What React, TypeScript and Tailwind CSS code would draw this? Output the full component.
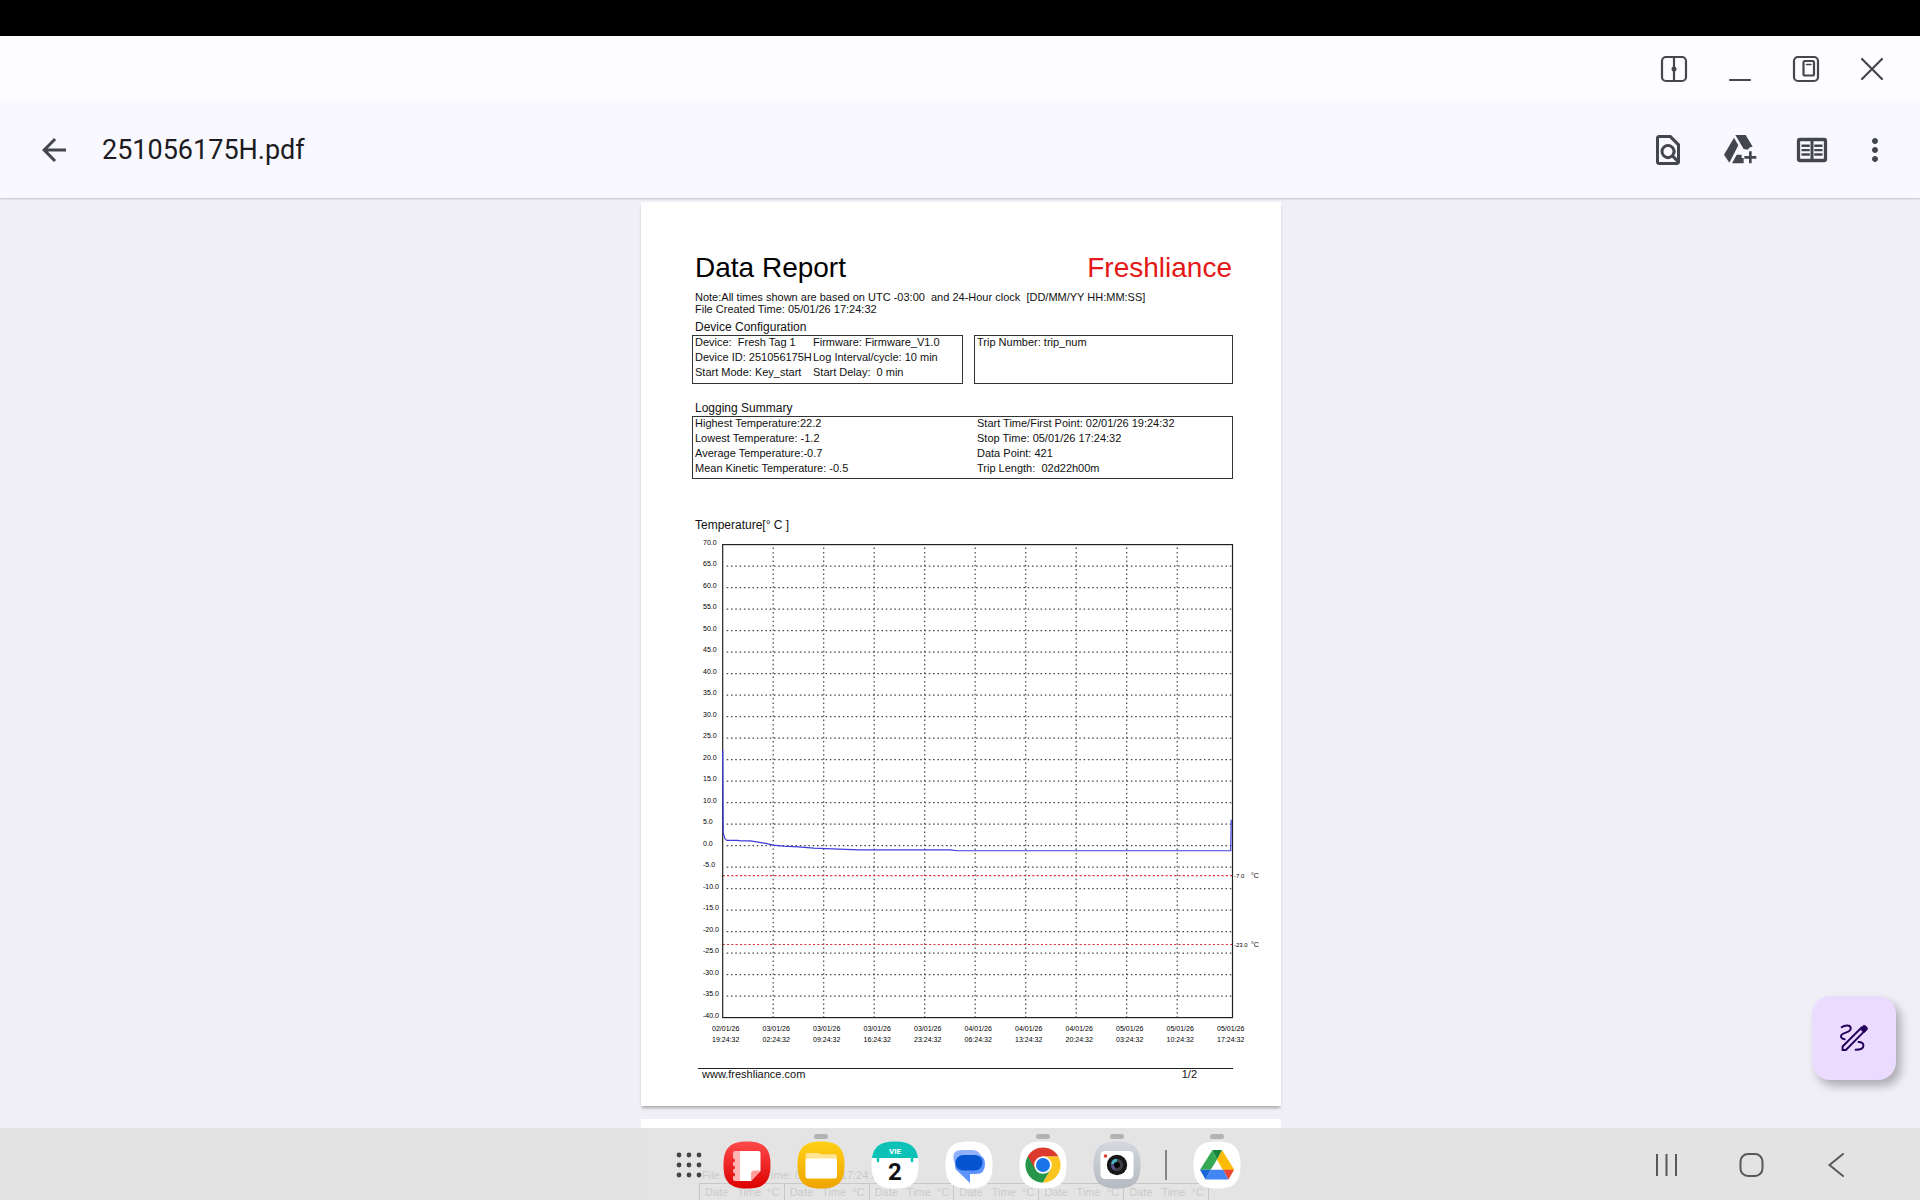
import type { ReactNode } from "react";
import { MdArrowBack, MdMoreVert, MdOutlineFindInPage } from "react-icons/md";

const SQUIRCLE = "M24 .5C41 .5 47.5 7 47.5 24S41 47.5 24 47.5.5 41 .5 24 7 .5 24 .5Z";

const windowButtons: { label: string; icon: ReactNode }[] = [
  {
    label: "Split screen",
    icon: (
      <>
        <rect x="4" y="4" width="24" height="24" rx="4" />
        <path d="M16 4v24" />
        <circle cx="16" cy="16" r="2.500" fill="currentColor" stroke="none" />
      </>
    ),
  },
  { label: "Minimise", icon: <path d="M6 27h20" /> },
  {
    label: "Pop-up view",
    icon: (
      <>
        <rect x="4" y="4" width="24" height="24" rx="4" />
        <rect x="13.500" y="8" width="10.500" height="14.500" rx="1.500" />
        <path d="M16.500 11.500h4.500" strokeWidth="1.500" />
      </>
    ),
  },
  { label: "Close", icon: <path d="M6 6l20 20M26 6l-20 20" /> },
];

function WindowBar() {
  return (
    <div className="flex h-[66px] shrink-0 items-center justify-end gap-[34px] bg-[#fdfdff] pr-8 text-[#47474b]">
      {windowButtons.map((b) => (
        <button key={b.label} aria-label={b.label} className="h-8 w-8">
          <svg
            viewBox="0 0 32 32"
            className="h-8 w-8"
            fill="none"
            stroke="currentColor"
            strokeWidth="2.200"
            strokeLinecap="round"
          >
            {b.icon}
          </svg>
        </button>
      ))}
    </div>
  );
}

function AddToDriveIcon() {
  return (
    <svg viewBox="21 6 108 108" className="h-9 w-9" fill="currentColor">
      <path d="M27 74 57 23l13 23-27 52Z" />
      <path d="M61 15h31l21 35q-10 0-15 9l-12-2Z" />
      <path d="M65 74h15v10h6v16H51Z" />
      <path d="M106 64v36M88 82h36" fill="none" stroke="currentColor" strokeWidth="8" />
    </svg>
  );
}

function ReaderIcon() {
  return (
    <svg viewBox="0 0 24 24" className="h-9 w-9" fill="none" stroke="currentColor" strokeWidth="1.600">
      <rect x="3" y="5" width="18" height="14" rx="1" strokeWidth="2.200" />
      <path d="M12 5v14" strokeWidth="2" />
      <path d="M5 9.200h5.500M5 12.100h5.500M5 15h5.500M13.500 9.200H19M13.500 12.100H19M13.500 15H19" />
    </svg>
  );
}

function AppBar() {
  return (
    <header className="relative z-10 flex h-24 shrink-0 items-center bg-[#f9f8ff] pr-[27px] pl-9 text-[#44464f] shadow-[0_1px_2px_rgba(0,0,0,0.2)]">
      <button aria-label="Back">
        <MdArrowBack className="h-9 w-9" />
      </button>
      <h1 className="ml-[30px] font-['Roboto',sans-serif] text-[27px] leading-8 text-[#1b1b21]">251056175H.pdf</h1>
      <div className="ml-auto flex items-center gap-9">
        <button aria-label="Find in file">
          <MdOutlineFindInPage className="h-9 w-9" />
        </button>
        <button aria-label="Add to Drive">
          <AddToDriveIcon />
        </button>
        <button aria-label="Reading mode">
          <ReaderIcon />
        </button>
      </div>
      <button aria-label="More options" className="ml-[27px]">
        <MdMoreVert className="h-9 w-9" />
      </button>
    </header>
  );
}

const timeLabels = [
  ["02/01/26", "19:24:32"],
  ["03/01/26", "02:24:32"],
  ["03/01/26", "09:24:32"],
  ["03/01/26", "16:24:32"],
  ["03/01/26", "23:24:32"],
  ["04/01/26", "06:24:32"],
  ["04/01/26", "13:24:32"],
  ["04/01/26", "20:24:32"],
  ["05/01/26", "03:24:32"],
  ["05/01/26", "10:24:32"],
  ["05/01/26", "17:24:32"],
];

// [time step, temperature]
const readings = [
  [0, 22.2],
  [0.01, 3],
  [0.04, 1.7],
  [0.08, 1.2],
  [0.3, 1.2],
  [0.35, 1.1],
  [0.55, 1.1],
  [0.7, 0.8],
  [0.85, 0.5],
  [1, 0.1],
  [1.2, -0.1],
  [1.5, -0.3],
  [1.8, -0.6],
  [2.3, -0.8],
  [2.7, -1],
  [4.5, -1],
  [4.65, -1.2],
  [10.06, -1.2],
  [10.07, 6],
];

const limits = [
  { value: -7, label: "-7.0" },
  { value: -23, label: "-23.0" },
];

const LEFT = 81.7;
const RIGHT = 591.5;
const TOP = 11.6;
const BOTTOM = 484.6;
const xOf = (step: number) => LEFT + step * 50.5;
const yOf = (temp: number) => TOP + (70 - temp) * 4.3;

function TemperatureChart() {
  const ticks = Array.from({ length: 23 }, (_, i) => 70 - i * 5);
  const points = readings.map(([s, t]) => `${xOf(s)},${yOf(t)}`).join(" ");

  return (
    <svg viewBox="0 0 640 520" className="block w-full font-['Liberation_Sans',Arial,sans-serif]" fill="#000">
      <g stroke="#444" strokeWidth="1.200" strokeDasharray="1.500 2.800">
        {ticks.slice(1, -1).map((t) => (
          <line key={t} x1={LEFT + 4} x2={RIGHT} y1={yOf(t)} y2={yOf(t)} />
        ))}
        {timeLabels.slice(1, -1).map((_, i) => (
          <line key={i} x1={xOf(i + 1)} x2={xOf(i + 1)} y1={TOP + 3} y2={BOTTOM} />
        ))}
      </g>
      {limits.map((l) => (
        <g key={l.label}>
          <line
            x1={LEFT}
            x2={RIGHT}
            y1={yOf(l.value)}
            y2={yOf(l.value)}
            stroke="#e03030"
            strokeWidth="1.200"
            strokeDasharray="2.100 2.200"
          />
          <text x="593" y={yOf(l.value) + 2} fontSize="6">
            {l.label}
          </text>
          <text x="610" y={yOf(l.value) + 2} fontSize="7">
            °C
          </text>
        </g>
      ))}
      <rect x={LEFT} y={TOP} width={RIGHT - LEFT} height={BOTTOM - TOP} fill="none" stroke="#222" strokeWidth="1.200" />
      <polyline points={points} fill="none" stroke="#3c3cdc" strokeWidth="1.200" />
      {ticks.map((t) => (
        <text key={t} x="62" y={yOf(t)} fontSize="7">
          {t.toFixed(1)}
        </text>
      ))}
      {timeLabels.map(([date, time], i) => (
        <g key={i} fontSize="7" textAnchor="middle">
          <text x={xOf(i) + 3} y="498">
            {date}
          </text>
          <text x={xOf(i) + 3} y="509">
            {time}
          </text>
        </g>
      ))}
    </svg>
  );
}

const deviceRows = [
  ["Device:  Fresh Tag 1", "Firmware: Firmware_V1.0"],
  ["Device ID: 251056175H", "Log Interval/cycle: 10 min"],
  ["Start Mode: Key_start", "Start Delay:  0 min"],
];

const summaryRows = [
  ["Highest Temperature:22.2", "Start Time/First Point: 02/01/26 19:24:32"],
  ["Lowest Temperature: -1.2", "Stop Time: 05/01/26 17:24:32"],
  ["Average Temperature:-0.7", "Data Point: 421"],
  ["Mean Kinetic Temperature: -0.5", "Trip Length:  02d22h00m"],
];

function ReportPage() {
  return (
    <article className="w-full max-w-[640px] bg-white pt-[50px] pb-[26px] font-['Liberation_Sans',Arial,sans-serif] text-[11px] leading-3 text-[#111] shadow-[0_3px_3px_-1px_rgba(0,0,0,0.3)]">
      <div className="pr-12 pl-[51px]">
        <div className="flex justify-between pr-px pl-[3px] text-[28px] leading-8">
          <h2 className="text-black">Data Report</h2>
          <span className="text-[#e51717]">Freshliance</span>
        </div>
        <div className="mt-[7px] pl-[3px] whitespace-pre">
          <p>Note:All times shown are based on UTC -03:00  and 24-Hour clock  [DD/MM/YY HH:MM:SS]</p>
          <p>File Created Time: 05/01/26 17:24:32</p>
        </div>

        <h3 className="mt-1 pl-[3px] text-xs leading-4">Device Configuration</h3>
        <div className="grid grid-cols-[271px_1fr] gap-[11px] leading-[15px] whitespace-pre">
          <div className="border border-[#333] pb-0.5 pl-0.5">
            {deviceRows.map(([a, b]) => (
              <div key={a} className="-mt-px mb-px grid grid-cols-[118px_1fr]">
                <span>{a}</span>
                <span>{b}</span>
              </div>
            ))}
          </div>
          <div className="border border-[#333] pl-0.5">
            <p className="-mt-px">Trip Number: trip_num</p>
          </div>
        </div>

        <h3 className="mt-4 pl-[3px] text-xs leading-4">Logging Summary</h3>
        <div className="border border-[#333] pb-px pl-0.5 leading-[15px] whitespace-pre">
          {summaryRows.map(([a, b]) => (
            <div key={a} className="-mt-px mb-px grid grid-cols-[282px_1fr]">
              <span>{a}</span>
              <span>{b}</span>
            </div>
          ))}
        </div>

        <h3 className="mt-[38px] pl-[3px] text-xs leading-4">Temperature[° C ]</h3>
      </div>
      <TemperatureChart />
      <footer className="mt-[15px] mr-12 ml-[57px] flex justify-between border-t border-[#222] pr-9 pl-1 leading-[11px]">
        <a href="#site">www.freshliance.com</a>
        <span>1/2</span>
      </footer>
    </article>
  );
}

function NextPage() {
  return (
    <article className="mt-[13px] w-full max-w-[640px] shrink-0 bg-white pt-[50px] pr-[72px] pb-20 pl-[58px] font-['Liberation_Sans',Arial,sans-serif] text-[11px] leading-3 text-black">
      <p className="pl-[3px]">File Created Time: 05/01/26 17:24:32</p>
      <table className="mt-0.5 w-full table-fixed border-collapse">
        <thead>
          <tr>
            {[0, 1, 2, 3, 4, 5].map((n) => (
              <th key={n} className="border border-black py-0.5 pl-[5px] text-left font-normal whitespace-pre">
                Date   Time  °C
              </th>
            ))}
          </tr>
        </thead>
      </table>
    </article>
  );
}

function NotesIcon() {
  return (
    <>
      <defs>
        <linearGradient id="notes" x2="0" y2="1">
          <stop stopColor="#ff4b4b" />
          <stop offset="1" stopColor="#dc0000" />
        </linearGradient>
      </defs>
      <path d={SQUIRCLE} fill="url(#notes)" />
      <path d="M12 10h6v30h-6q-2 0-2-2v-2.500a2 2 0 0 0 0-4v-3a2 2 0 0 0 0-4v-3a2 2 0 0 0 0-4V12q0-2 2-2Z" fill="#ffb3b3" />
      <path d="M17 10h18.500q2 0 2 2v18L28 40H17Z" fill="#fff" />
      <path d="M37.500 29.500 28 40v-7q0-3.500 3.500-3.500Z" fill="#ff9d9d" />
    </>
  );
}

function FilesIcon() {
  return (
    <>
      <defs>
        <linearGradient id="files" x2="0" y2="1">
          <stop stopColor="#ffd016" />
          <stop offset="1" stopColor="#efa500" />
        </linearGradient>
      </defs>
      <path d={SQUIRCLE} fill="url(#files)" />
      <path d="M8.500 22v-8q0-2 2-2H21q1.500 0 2.300 1.200h14.200q2.500 0 2.500 2.500V22Z" fill="#ffe591" />
      <rect x="8.500" y="17.500" width="31.500" height="20" rx="2.500" fill="#fff" />
    </>
  );
}

function CalendarIcon() {
  return (
    <>
      <defs>
        <clipPath id="cal">
          <path d={SQUIRCLE} />
        </clipPath>
      </defs>
      <path d={SQUIRCLE} fill="#fff" />
      <path d="M0 0h48v17H0Z" fill="#0cc2b6" clipPath="url(#cal)" />
      <path d="M7 16v4M41 16v4" stroke="#0cc2b6" strokeWidth="2.500" strokeLinecap="round" />
      <g textAnchor="middle" fontWeight="700" className="font-['Roboto',sans-serif]">
        <text x="24" y="12.500" fontSize="8" fill="#fff">
          VIE
        </text>
        <text x="24" y="39" fontSize="24" fill="#111">
          2
        </text>
      </g>
    </>
  );
}

function MessagesIcon() {
  return (
    <>
      <path d={SQUIRCLE} fill="#fff" />
      <path d="M17 9h10q8 0 9.500 8v6H10l-1-3Q6 9 17 9Z" fill="#8fb1fb" />
      <path d="M10 24q0-9 9-9h17q4 2 4 8 0 10-9 10h-6v9L10.500 28Z" fill="#5e93fb" />
      <rect x="10.500" y="14" width="27" height="15.500" rx="7.700" fill="#0654cf" />
    </>
  );
}

function ChromeIcon() {
  return (
    <>
      <path d={SQUIRCLE} fill="#fff" />
      <path d="M8.800 15.200A17.600 17.600 0 0 0 24 41.600L32 28 24 24Z" fill="#26964a" />
      <path d="M39.200 15.200A17.600 17.600 0 0 1 24 41.600L31.600 28.400 31 19 24 15.200Z" fill="#fcc41f" />
      <path d="M8.800 15.200A17.600 17.600 0 0 1 39.200 15.200H24L16.500 28.500Z" fill="#dd3a2e" />
      <circle cx="24" cy="24" r="8.800" fill="#fff" />
      <circle cx="24" cy="24" r="7" fill="#1b73e8" />
    </>
  );
}

function CameraIcon() {
  return (
    <>
      <defs>
        <linearGradient id="cam" x2="0" y2="1">
          <stop stopColor="#d4d8de" />
          <stop offset="1" stopColor="#b5b9c1" />
        </linearGradient>
      </defs>
      <path d={SQUIRCLE} fill="url(#cam)" />
      <rect x="7.500" y="10" width="33" height="28" rx="4.500" fill="#fff" />
      <circle cx="12.500" cy="15" r="1.800" fill="#e23b34" />
      <circle cx="24" cy="24" r="10.200" fill="#17171a" />
      <circle cx="24" cy="24" r="6.200" fill="#3e3e46" />
      <path d="M18 23a6.200 6.200 0 0 1 6-5.200v3a4 4 0 0 0-3 2.200Z" fill="#45b3c4" />
      <path d="M18 23.500a6.200 6.200 0 0 0 3.500 6l1-3.500-1.500-2.500Z" fill="#5b4f8e" />
      <circle cx="24" cy="24" r="3" fill="#050507" />
    </>
  );
}

function DriveIcon() {
  return (
    <>
      <path d={SQUIRCLE} fill="#fff" />
      <path d="M19.500 9h9.500l6 10-5.500 9.500h11.500L29 9Z" fill="#fcbc05" />
      <path d="M19.500 9 7 28.700h10.700L24 18.500Z" fill="#34a853" />
      <path d="M29 9 24 18.500l5.700 10.200H41Z" fill="#fcbc05" />
      <path d="M19.500 9H29l-5 9.500Z" fill="#16853c" />
      <path d="M12.500 38.500 17.700 28.700h12.600l5.200 9.800Z" fill="#4285f4" />
      <path d="M7 28.700h10.700l-5.200 9.800Z" fill="#1a66d6" />
      <path d="M41 28.700H30.300l5.200 9.800Z" fill="#ea4335" />
    </>
  );
}

const apps = [
  { name: "Notes", icon: <NotesIcon />, open: false },
  { name: "My Files", icon: <FilesIcon />, open: true },
  { name: "Calendar", icon: <CalendarIcon />, open: false },
  { name: "Messages", icon: <MessagesIcon />, open: false },
  { name: "Chrome", icon: <ChromeIcon />, open: true },
  { name: "Camera", icon: <CameraIcon />, open: true },
];

function AppButton({ name, icon, open }: { name: string; icon: ReactNode; open: boolean }) {
  return (
    <button aria-label={name} className="relative h-12 w-12">
      {open && <span className="absolute -top-[7px] left-[17px] h-[5px] w-3.5 rounded-full bg-[#b3b3b3]" />}
      <svg viewBox="0 0 48 48" className="h-12 w-12">
        {icon}
      </svg>
    </button>
  );
}

function Taskbar() {
  return (
    <nav className="absolute inset-x-0 bottom-0 z-20 grid h-[72px] grid-cols-[1fr_auto_1fr] items-center bg-[#e1e1e1]/89 pt-px">
      <span />
      <div className="flex items-center pr-[3px]">
        <button aria-label="All apps" className="mr-[21px]">
          <svg viewBox="0 0 26 26" className="h-[26px] w-[26px]" fill="#454545">
            {[3, 13, 23].map((y) => [3, 13, 23].map((x) => <circle key={`${x}-${y}`} cx={x} cy={y} r="2.400" />))}
          </svg>
        </button>
        <div className="flex gap-[26px]">
          {apps.map((a) => (
            <AppButton key={a.name} {...a} />
          ))}
        </div>
        <span className="mr-[26px] ml-6 h-[30px] w-0.5 bg-[#858585]" />
        <AppButton name="Drive" icon={<DriveIcon />} open />
      </div>
      <div className="flex justify-end gap-[59px] pr-[70px] text-[#58585a]">
        <button aria-label="Recent apps">
          <svg viewBox="0 0 26 26" className="h-[26px] w-[26px]" fill="none" stroke="currentColor" strokeWidth="2">
            <path d="M3 2v22M12.500 2v22M22 2v22" />
          </svg>
        </button>
        <button aria-label="Home">
          <svg viewBox="0 0 26 26" className="h-[26px] w-[26px]" fill="none" stroke="currentColor" strokeWidth="2">
            <rect x="1.500" y="2" width="22" height="22" rx="7.500" />
          </svg>
        </button>
        <button aria-label="Back">
          <svg
            viewBox="0 0 26 26"
            className="h-[26px] w-[26px]"
            fill="none"
            stroke="currentColor"
            strokeWidth="2"
            strokeLinecap="round"
          >
            <path d="M19 2 5.500 13 19 24" />
          </svg>
        </button>
      </div>
    </nav>
  );
}

function AnnotateButton() {
  return (
    <button
      aria-label="Annotate"
      className="absolute right-6 bottom-[120px] z-10 flex h-[84px] w-[84px] items-center justify-center rounded-[18px] bg-[#ebdcff] text-[#23005c] shadow-[5px_6px_10px_rgba(0,0,0,0.28)]"
    >
      <svg
        viewBox="0 0 86 84"
        className="h-7 w-7"
        fill="none"
        stroke="currentColor"
        strokeWidth="6"
        strokeLinecap="round"
      >
        <path d="M5 9C14 2 33 0 33 13 33 28 3 23 3 37c0 5 4 8 11 9" />
        <path d="M57 54c9 0 15 4 15 11 0 9-9 13-24 13" />
        <path d="M8 79V68L66 10l10 10L18 79Z" strokeLinecap="butt" />
        <path d="M62 14 70 5q4-4 9 0l3 3q5 5 1 9l-9 9Z" fill="currentColor" strokeWidth="2" />
      </svg>
    </button>
  );
}

export default function App() {
  return (
    <div className="relative flex h-screen flex-col overflow-hidden bg-[#f0eff6] font-['Roboto',sans-serif]">
      <div className="h-9 shrink-0 bg-black" />
      <WindowBar />
      <AppBar />
      <main className="flex min-h-0 flex-1 flex-col items-center overflow-hidden pt-1 pl-0.5">
        <ReportPage />
        <NextPage />
      </main>
      <AnnotateButton />
      <Taskbar />
    </div>
  );
}
